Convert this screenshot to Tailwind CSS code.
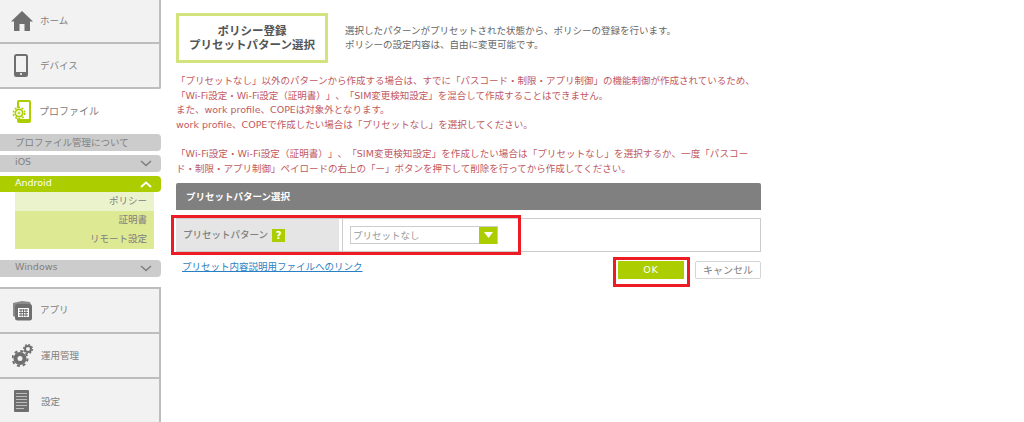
<!DOCTYPE html>
<html lang="ja">
<head>
  <meta charset="UTF-8" />
  <title>プリセットパターン選択</title>
  <script src="https://cdn.jsdelivr.net/npm/@tailwindcss/browser@4"></script>
</head>
<body class="bg-white overflow-hidden font-['DejaVu_Sans','Noto_Sans_CJK_JP',sans-serif] text-[9.5px] text-[#808080] [text-spacing-trim:space-all]">
  <div class="flex h-[422px] w-[1024px] relative overflow-hidden">

    <!-- sidebar -->
    <aside class="w-[161px] shrink-0 flex flex-col">
      <a class="h-[44px] bg-[#f2f2f2] border-r-2 border-b-2 border-[#bdbdbd] flex items-center pl-[11px]">
        <svg class="w-[22px] h-[20px]" viewBox="0 0 22 20"><path fill="#6f6f6f" d="M11 0 L22 10.500 L19 10.500 L19 20 L13.500 20 L13.500 13 L8.500 13 L8.500 20 L3 20 L3 10.500 L0 10.500 Z"/></svg>
        <span class="ml-[7px]">ホーム</span>
      </a>
      <a class="h-[45px] bg-[#f2f2f2] border-r-2 border-b-2 border-[#bdbdbd] rounded-br-[2px] flex items-center pl-[14px]">
        <svg class="w-[14px] h-[23px]" viewBox="0 0 14 23"><rect x="1" y="1" width="12" height="21" rx="1.500" fill="none" stroke="#6f6f6f" stroke-width="2"/><rect x="1" y="18" width="12" height="4" fill="#6f6f6f"/><circle cx="7" cy="20" r="1" fill="#fff"/></svg>
        <span class="ml-[12px] mt-[2px]">デバイス</span>
      </a>
      <a class="h-[45px] flex items-center pl-[12px]">
        <svg class="w-[19px] h-[23px]" viewBox="0 0 19 23"><rect x="6" y="1" width="12" height="21" rx="1" fill="none" stroke="#acce00" stroke-width="2"/><rect x="6" y="19" width="12" height="3" fill="#acce00"/><circle cx="7" cy="13" r="5.500" fill="#fff"/><circle cx="7" cy="13" r="4.500" fill="#acce00"/><circle cx="7" cy="13" r="5.700" fill="none" stroke="#acce00" stroke-width="1.600" stroke-dasharray="2 1.600"/><circle cx="7" cy="13" r="2.800" fill="#fff"/><path d="M7 11.500v3M5.500 13h3" stroke="#acce00" stroke-width="1"/></svg>
        <span class="ml-[8px] text-[10px]">プロファイル</span>
      </a>

      <div class="flex flex-col">
        <div class="h-[17px] bg-[#cccccc] rounded-r-[4px] pl-[15px] leading-[17px]">プロファイル管理について</div>
        <div class="h-[17px] mt-[4px] bg-[#cccccc] rounded-r-[4px] pl-[15px] pr-[9px] flex items-center justify-between">
          <span class="mb-[2px]">iOS</span>
          <svg class="w-[12px] h-[7px]" viewBox="0 0 12 7"><path d="M1 1l5 4.500L11 1" fill="none" stroke="#808080" stroke-width="1.600"/></svg>
        </div>
        <div class="h-[16px] mt-[4px] bg-[#acce00] rounded-r-[4px] pl-[15px] pr-[9px] flex items-center justify-between text-white">
          <span class="mb-[2px]">Android</span>
          <svg class="w-[12px] h-[7px]" viewBox="0 0 12 7"><path d="M1 6l5-4.500L11 6" fill="none" stroke="#fff" stroke-width="1.800"/></svg>
        </div>
        <div class="ml-[15px] mr-[7px] text-right">
          <div class="h-[19px] leading-[18px] pr-[7px] bg-[#eaf3cc]">ポリシー</div>
          <div class="h-[18px] leading-[18px] pr-[7px] bg-[#dde993]">証明書</div>
          <div class="h-[20px] leading-[19px] pr-[7px] bg-[#dde993]">リモート設定</div>
        </div>
        <div class="h-[17px] mt-[11px] bg-[#cccccc] rounded-r-[4px] pl-[15px] pr-[9px] flex items-center justify-between">
          <span class="mb-[2px]">Windows</span>
          <svg class="w-[12px] h-[7px]" viewBox="0 0 12 7"><path d="M1 1l5 4.500L11 1" fill="none" stroke="#808080" stroke-width="1.600"/></svg>
        </div>
      </div>

      <a class="h-[47px] mt-[10px] bg-[#f2f2f2] border-t-2 border-r-2 border-b-2 border-[#bdbdbd] flex items-center pl-[11px]">
        <svg class="w-[22px] h-[20px]" viewBox="0 0 22 20"><path fill="#8a8a8a" d="M2 2l9-2 8 1 1 3H5L4 16 2 15z"/><rect x="4" y="3" width="17" height="16.500" rx="2.500" fill="#6f6f6f"/><rect x="7" y="7" width="11" height="9" fill="#fff"/><path d="M8 9h9M8 11.500h9M8 14h9M10 8v7.500M12.500 8v7.500M15 8v7.500" stroke="#6f6f6f" stroke-width="1"/></svg>
        <span class="ml-[7px]">アプリ</span>
      </a>
      <a class="h-[45px] bg-[#f2f2f2] border-r-2 border-b-2 border-[#bdbdbd] flex items-center pl-[12px]">
        <svg class="w-[22px] h-[23px]" viewBox="0 0 22 23"><circle cx="8" cy="14.500" r="4.500" fill="none" stroke="#6f6f6f" stroke-width="4"/><circle cx="8" cy="14.500" r="7.500" fill="none" stroke="#6f6f6f" stroke-width="2" stroke-dasharray="3 2.900"/><circle cx="16" cy="5" r="3" fill="none" stroke="#6f6f6f" stroke-width="2"/><circle cx="16" cy="5" r="4.500" fill="none" stroke="#6f6f6f" stroke-width="1.200" stroke-dasharray="1.800 1.700"/></svg>
        <span class="ml-[7px] mt-[2px]">運用管理</span>
      </a>
      <a class="flex-1 bg-[#f2f2f2] border-r-2 border-[#bdbdbd] flex items-center pl-[14px]">
        <svg class="w-[15px] h-[22px]" viewBox="0 0 15 22"><rect width="15" height="22" rx="1" fill="#6f6f6f"/><path d="M2 3.500h11M2 6.500h11M2 9.500h11M2 12.500h11M2 15.500h11M2 18.500h8" stroke="#bdbdbd" stroke-width="1"/></svg>
        <span class="ml-[12px] mt-[4px]">設定</span>
      </a>
    </aside>

    <!-- main -->
    <main class="w-[585px] ml-[15px] pt-[13px]">
      <div class="flex items-center">
        <div class="w-[152px] h-[50px] border-[3px] border-[#d3e47f] flex items-center justify-center text-center font-bold text-[#555] text-[11.500px] leading-[14px]">ポリシー登録<br>プリセットパターン選択</div>
        <p class="ml-[17px] leading-[14px] text-[#666]">選択したパターンがプリセットされた状態から、ポリシーの登録を行います。<br>ポリシーの設定内容は、自由に変更可能です。</p>
      </div>

      <div class="mt-[11px] text-[#c0595f] leading-[14.500px] whitespace-nowrap">
        <p>「プリセットなし」以外のパターンから作成する場合は、すでに「パスコード・制限・アプリ制御」の機能制御が作成されているため、</p>
        <p>「Wi-Fi設定・Wi-Fi設定（証明書）」、「SIM変更検知設定」を混合して作成することはできません。</p>
        <p>また、work profile、COPEは対象外となります。</p>
        <p>work profile、COPEで作成したい場合は「プリセットなし」を選択してください。</p>
        <p class="mt-[15px] tracking-[0.1px]">「Wi-Fi設定・Wi-Fi設定（証明書）」、「SIM変更検知設定」を作成したい場合は「プリセットなし」を選択するか、一度「パスコー</p>
        <p>ド・制限・アプリ制御」ペイロードの右上の「ー」ボタンを押下して削除を行ってから作成してください。</p>
      </div>

      <div class="mt-[7px] h-[27px] bg-[#808080] rounded-t-[2px] pl-[10px] leading-[27px] text-white font-bold">プリセットパターン選択</div>
      <div class="mt-[8px] h-[34px] flex border border-[#cccccc] border-l-0">
        <div class="w-[163px] bg-[#e5e5e5] flex items-center pl-[7px] font-medium">
          プリセットパターン
          <span class="ml-[4px] w-[13px] h-[13px] bg-[#acce00] text-white font-bold text-[10px] text-center leading-[13px]">?</span>
        </div>
        <div class="ml-[3px] flex-1 border-l border-[#cccccc] pl-[7px] flex items-center">
          <div class="w-[148px] h-[18px] border border-[#cccccc] flex items-center justify-between pl-[2px] text-[#999]">
            <span class="mt-[2px]">プリセットなし</span>
            <span class="w-[18px] h-[17px] bg-[#acce00] flex items-center justify-center">
              <svg class="w-[9px] h-[6px]" viewBox="0 0 9 6"><path d="M0 0h9L4.500 6z" fill="#fff"/></svg>
            </span>
          </div>
        </div>
      </div>
      <div class="flex justify-between mt-[7px]">
        <a class="ml-[6px] mt-[1px] text-[#2b7fc4] underline">プリセット内容説明用ファイルへのリンク</a>
        <div class="flex mt-[2px] mr-0">
          <button class="w-[66px] h-[18px] bg-[#acce00] text-white text-[9.500px] tracking-[1px]">OK</button>
          <button class="ml-[11px] w-[66px] h-[18px] border border-[#d5d5d5] rounded-[2px] text-[#808080] text-[10px]">キャンセル</button>
        </div>
      </div>
    </main>

    <!-- red highlight frames drawn over the screenshot -->
    <div class="absolute left-[171px] top-[215px] w-[350px] h-[40px] border-[3px] border-[#ed1c24]"></div>
    <div class="absolute left-[613px] top-[257px] w-[77px] h-[30px] border-[3px] border-[#ed1c24]"></div>
  </div>
</body>
</html>
